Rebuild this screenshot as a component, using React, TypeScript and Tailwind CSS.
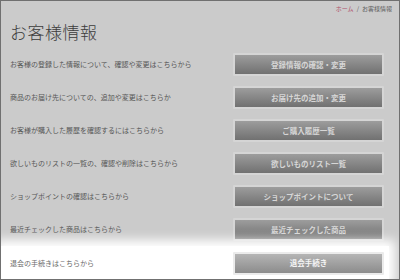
const rows = [
    { text: "お客様の登録した情報について、確認や変更はこちらから", label: "登録情報の確認・変更" },
    { text: "商品のお届け先についての、追加や変更はこちらか", label: "お届け先の追加・変更" },
    { text: "お客様が購入した履歴を確認するにはこちらから", label: "ご購入履歴一覧" },
    { text: "欲しいものリストの一覧の、確認や削除はこちらから", label: "欲しいものリスト一覧" },
    { text: "ショップポイントの確認はこちらから", label: "ショップポイントについて" },
    { text: "最近チェックした商品はこちらから", label: "最近チェックした商品" },
];

const font = { fontFamily: '"Noto Sans CJK JP", "Noto Sans", sans-serif' };

export default function App() {
    return (
        <div style={font} className="w-[400px] h-[280px] relative overflow-hidden bg-[#cbcbcb] border border-[#707070]">
            <div className="flex justify-end pr-[7px] pt-[3px] text-[6px] leading-[10px] text-[#5a5a5a]">
                <span className="text-[#b0506a]">ホーム</span>
                <span className="mx-[3px]">/</span>
                <span>お客様情報</span>
            </div>

            <h1 className="pl-[9px] mt-[7px] text-[17px] leading-[22px] font-light text-[#3c3c3c] tracking-[0.5px]">お客様情報</h1>

            <div className="mt-[5px] flex flex-col">
                {rows.map((r) => (
                    <div key={r.label} className="h-[33px] flex items-center justify-between pl-[9px] pr-[15px]">
                        <p className="text-[7px] text-[#575757]">{r.text}</p>
                        <div className="w-[151px] h-[23px] p-[2px] bg-[#d5d5d5] rounded-[1px]">
                            <div className="h-full bg-gradient-to-b from-[#9d9d9d] to-[#717171] flex items-center justify-center text-[7.5px] font-bold text-[#d6d6d6]">
                                {r.label}
                            </div>
                        </div>
                    </div>
                ))}
                <div className="h-[34px] flex items-center justify-between pl-[9px] pr-[15px] bg-white shadow-[0_0_10px_6px_#ffffff] mr-[10px]">
                    <p className="text-[7px] text-[#6a6a6a]">退会の手続きはこちらから</p>
                    <div className="w-[151px] h-[23px] p-[2px] bg-[#ebebeb] rounded-[1px] -mr-[10px]">
                        <div className="h-full bg-gradient-to-b from-[#b5b5b5] to-[#8c8c8c] flex items-center justify-center text-[7.5px] font-bold text-[#f4f4f4]">
                            退会手続き
                        </div>
                    </div>
                </div>
            </div>
        </div>
    );
}
